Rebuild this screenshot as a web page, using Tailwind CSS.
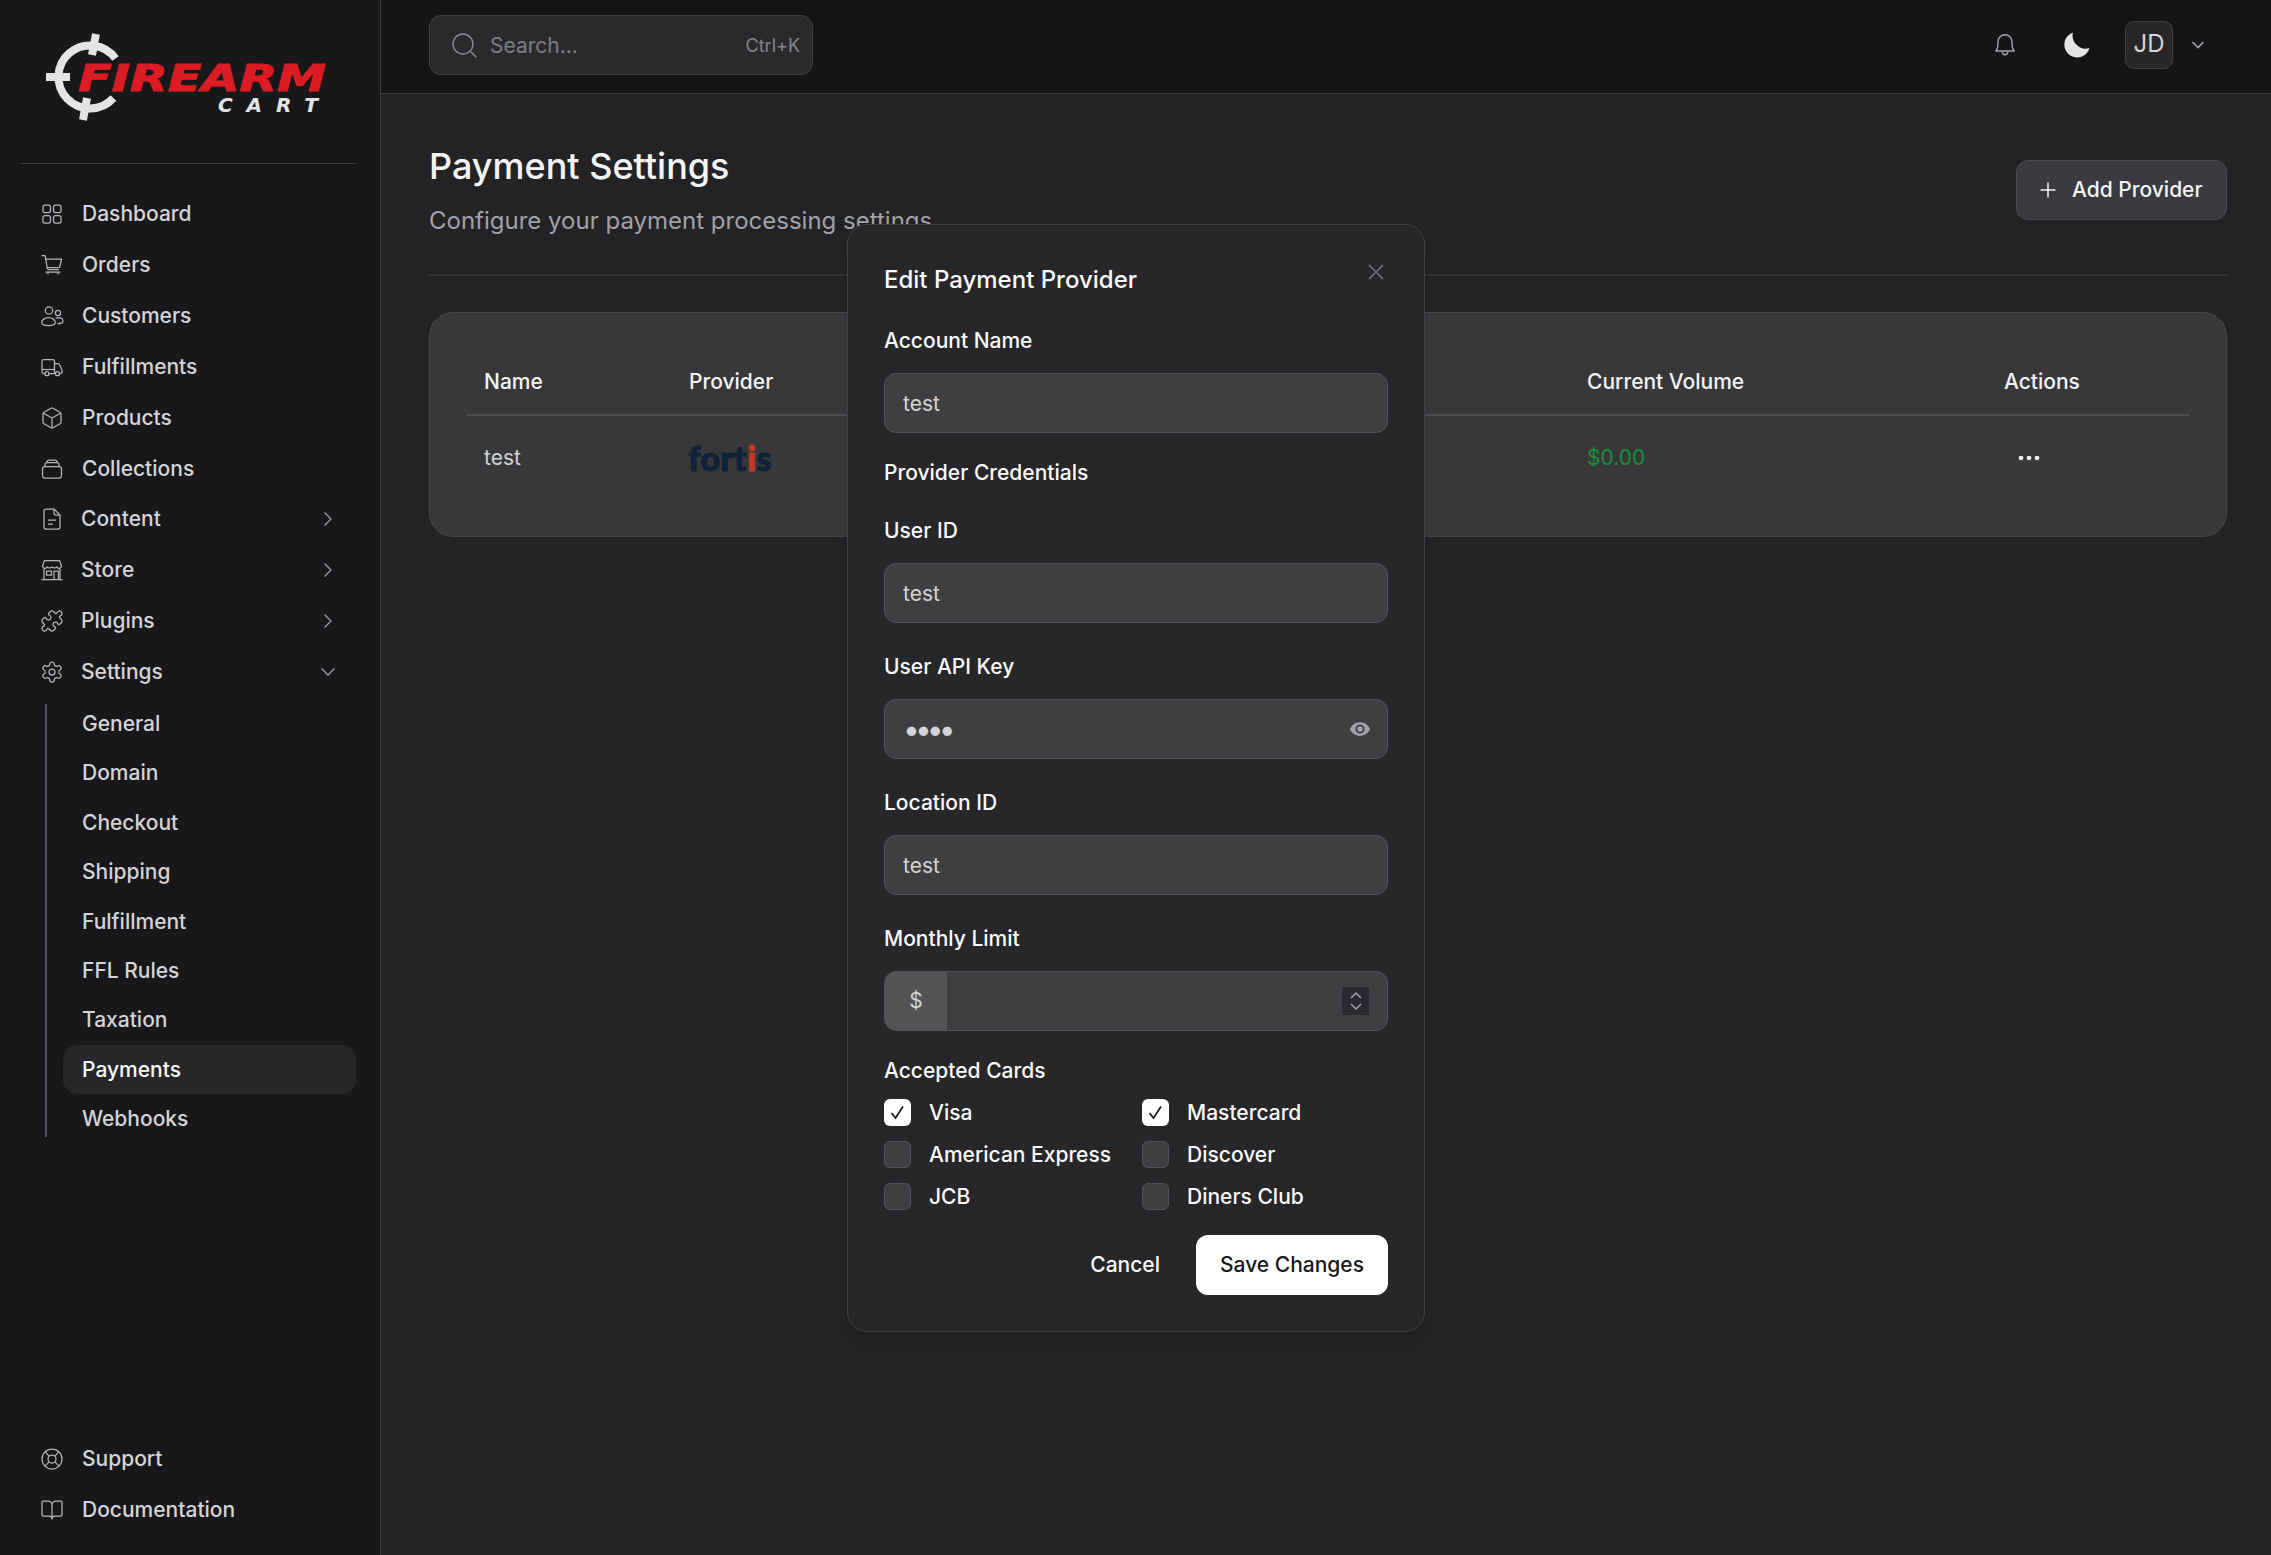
<!DOCTYPE html>
<html lang="en">
<head>
    <meta charset="UTF-8">
    <title>Payment Settings</title>
    <script src="https://cdn.jsdelivr.net/npm/@tailwindcss/browser@4"></script>
</head>
<body class="bg-[#232325] font-['Inter',sans-serif]">
<div class="relative flex h-[1555px] w-[2271px] overflow-hidden">

    <!-- Sidebar -->
    <aside class="flex w-[381px] shrink-0 flex-col border-r border-[#3a3a3e] bg-[#18181b] text-[21px] font-medium text-[#d4d4d8]">
        <div class="h-[163px] shrink-0">
            <svg class="block" width="381" height="163" viewBox="0 0 381 163">
                <path d="M115.500 58.500A31.500 31.500 0 1 0 113.400 98" fill="none" stroke="#e4e4e7" stroke-width="8"/>
                <path d="M46 77H70M96 34L92 55M87 98L83 120" fill="none" stroke="#e4e4e7" stroke-width="8"/>
                <text x="78" y="91" font-family="'DejaVu Sans',sans-serif" font-weight="700" font-style="italic" font-size="38" fill="#dc1c24" stroke="#dc1c24" stroke-width="1" textLength="248" lengthAdjust="spacingAndGlyphs">FIREARM</text>
                <text x="218" y="112" font-family="'DejaVu Sans',sans-serif" font-weight="700" font-style="italic" font-size="20" fill="#e4e4e7" textLength="100" lengthAdjust="spacing">CART</text>
            </svg>
        </div>
        <div class="ml-[21px] mr-[24px] h-px bg-[#3f3f46]"></div>

        <nav class="mt-[24px] pl-[40px] pr-[44px]">
            <a class="flex h-[51px] items-center gap-[18px]">
                <svg class="text-[#b4b4b8]" width="24" height="24" viewBox="0 0 24 24" fill="none" stroke="currentColor" stroke-width="1.25"><rect x="3" y="3" width="7.5" height="7.5" rx="2"/><rect x="13.5" y="3" width="7.5" height="7.5" rx="2"/><rect x="3" y="13.5" width="7.5" height="7.5" rx="2"/><rect x="13.5" y="13.5" width="7.5" height="7.5" rx="2"/></svg>
                Dashboard
            </a>
            <a class="flex h-[51px] items-center gap-[18px]">
                <svg class="text-[#b4b4b8]" width="24" height="24" viewBox="0 0 24 24" fill="none" stroke="currentColor" stroke-width="1.25" stroke-linecap="round" stroke-linejoin="round"><path d="M2 2.5h2.2a1 1 0 0 1 1 .8L7.4 15.5a1.5 1.5 0 0 0 1.5 1.2h9.4"/><path d="M5.6 6H21.5l-1.6 7.5a1.5 1.5 0 0 1-1.5 1.2H7.2"/><path d="M8 19.5v1.5M18 19.5v1.5"/><path d="M6 19h14"/></svg>
                Orders
            </a>
            <a class="flex h-[51px] items-center gap-[18px]">
                <svg class="text-[#b4b4b8]" width="24" height="24" viewBox="0 0 24 24" fill="none" stroke="currentColor" stroke-width="1.25"><circle cx="9" cy="6.5" r="3.7"/><circle cx="18" cy="9" r="2.6"/><path d="M8.5 21.5c-4 0-6.8-.9-6.8-3 0-2.600 3-4.800 6.800-4.800s6.800 2.200 6.800 4.800c0 2.100-2.800 3-6.800 3z"/><path d="M15.500 14.200c.8-.4 1.700-.7 2.700-.7 2.800 0 4.800 1.700 4.800 3.700 0 1.700-2.400 2.500-5.700 2.400"/></svg>
                Customers
            </a>
            <a class="flex h-[51px] items-center gap-[18px]">
                <svg class="text-[#b4b4b8]" width="24" height="24" viewBox="0 0 24 24" fill="none" stroke="currentColor" stroke-width="1.25" stroke-linejoin="round"><path d="M5 18.500H3.500A1.500 1.500 0 0 1 2 17V6a1.500 1.500 0 0 1 1.500-1.500H13A1.500 1.500 0 0 1 14.500 6v12.500H9"/><path d="M14.500 8.500h3.400a1.500 1.500 0 0 1 1.300.8l2.500 4.700a1.500 1.500 0 0 1 .3.900V17a1.500 1.500 0 0 1-1.500 1.500h-1"/><path d="M2 14.500h12.500"/><circle cx="7" cy="18.700" r="2"/><circle cx="17.500" cy="18.700" r="2"/></svg>
                Fulfillments
            </a>
            <a class="flex h-[51px] items-center gap-[18px]">
                <svg class="text-[#b4b4b8]" width="24" height="24" viewBox="0 0 24 24" fill="none" stroke="currentColor" stroke-width="1.25" stroke-linejoin="round"><path d="M21 8a2 2 0 0 0-1-1.730l-7-4a2 2 0 0 0-2 0l-7 4A2 2 0 0 0 3 8v8a2 2 0 0 0 1 1.730l7 4a2 2 0 0 0 2 0l7-4A2 2 0 0 0 21 16z"/><path d="m3.300 7 8.700 5 8.700-5M12 22V12"/></svg>
                Products
            </a>
            <a class="flex h-[51px] items-center gap-[18px]">
                <svg class="text-[#b4b4b8]" width="24" height="24" viewBox="0 0 24 24" fill="none" stroke="currentColor" stroke-width="1.25" stroke-linejoin="round"><rect x="2.500" y="9.500" width="19" height="11.500" rx="2.500"/><path d="M5 9.500V7.500a2 2 0 0 1 2-2h10a2 2 0 0 1 2 2v2"/><path d="M7 5.500V5a2 2 0 0 1 2-2h6a2 2 0 0 1 2 2v.5"/></svg>
                Collections
            </a>
            <a class="flex h-[50px] items-center gap-[17px]">
                <svg class="text-[#b4b4b8]" width="24" height="24" viewBox="0 0 24 24" fill="none" stroke="currentColor" stroke-width="1.25" stroke-linejoin="round"><path d="M14 2H6a2 2 0 0 0-2 2v16a2 2 0 0 0 2 2h12a2 2 0 0 0 2-2V8z"/><path d="M14 2v4a2 2 0 0 0 2 2h4M8 13h8M8 17h5"/></svg>
                Content
                <svg class="ml-auto text-[#a1a1aa]" width="16" height="16" viewBox="0 0 16 16" fill="none" stroke="currentColor" stroke-width="1.25"><path d="M4.500 1.500 11 8l-6.500 6.500"/></svg>
            </a>
            <a class="flex h-[51px] items-center gap-[17px]">
                <svg class="text-[#b4b4b8]" width="24" height="24" viewBox="0 0 24 24" fill="none" stroke="currentColor" stroke-width="1.25" stroke-linejoin="round"><path d="M4.500 2.500h15l2 5.500a2.500 2.500 0 0 1-4.800.8 3 3 0 0 1-4.700 0 3 3 0 0 1-4.700 0A2.500 2.500 0 0 1 2.500 8z"/><path d="M4 11v10M20 11v10M1.500 21.500h21"/><rect x="6.500" y="13" width="5" height="4"/><path d="M14 21v-8h4.500v8"/></svg>
                Store
                <svg class="ml-auto text-[#a1a1aa]" width="16" height="16" viewBox="0 0 16 16" fill="none" stroke="currentColor" stroke-width="1.25"><path d="M4.500 1.500 11 8l-6.500 6.500"/></svg>
            </a>
            <a class="flex h-[51px] items-center gap-[17px]">
                <svg class="text-[#b4b4b8]" width="24" height="24" viewBox="0 0 24 24" fill="none" stroke="currentColor" stroke-width="1.25" stroke-linejoin="round"><path d="M19.439 7.850c-.049.322.059.648.289.878l1.568 1.568c.47.47.706 1.087.706 1.704s-.235 1.233-.706 1.704l-1.611 1.611a.98.98 0 0 1-.837.276c-.47-.07-.802-.48-.968-.925a2.501 2.501 0 1 0-3.214 3.214c.446.166.855.497.925.968a.979.979 0 0 1-.276.837l-1.61 1.61a2.404 2.404 0 0 1-1.705.707 2.402 2.402 0 0 1-1.704-.706l-1.568-1.568a1.026 1.026 0 0 0-.877-.29c-.493.074-.84.504-1.020.968a2.500 2.500 0 1 1-3.237-3.237c.464-.18.894-.527.967-1.020a1.026 1.026 0 0 0-.289-.877l-1.568-1.568A2.402 2.402 0 0 1 1.998 12c0-.617.236-1.234.706-1.704L4.230 8.770c.24-.24.581-.353.917-.303.515.077.877.528 1.073 1.010a2.500 2.500 0 1 0 3.259-3.259c-.482-.196-.933-.558-1.010-1.073-.05-.336.062-.676.303-.917l1.525-1.525A2.402 2.402 0 0 1 12 1.998c.617 0 1.234.236 1.704.706l1.568 1.568c.23.23.556.338.877.29.493-.074.84-.504 1.020-.968a2.500 2.500 0 1 1 3.237 3.237c-.464.18-.894.527-.967 1.020Z"/></svg>
                Plugins
                <svg class="ml-auto text-[#a1a1aa]" width="16" height="16" viewBox="0 0 16 16" fill="none" stroke="currentColor" stroke-width="1.25"><path d="M4.500 1.500 11 8l-6.500 6.500"/></svg>
            </a>
            <a class="flex h-[51px] items-center gap-[17px]">
                <svg class="text-[#b4b4b8]" width="24" height="24" viewBox="0 0 24 24" fill="none" stroke="currentColor" stroke-width="1.25" stroke-linejoin="round"><path d="M12.220 2h-.44a2 2 0 0 0-2 2v.18a2 2 0 0 1-1 1.730l-.43.25a2 2 0 0 1-2 0l-.15-.08a2 2 0 0 0-2.730.73l-.22.38a2 2 0 0 0 .73 2.730l.15.1a2 2 0 0 1 1 1.720v.51a2 2 0 0 1-1 1.740l-.15.09a2 2 0 0 0-.73 2.730l.22.38a2 2 0 0 0 2.730.73l.15-.08a2 2 0 0 1 2 0l.43.25a2 2 0 0 1 1 1.730V20a2 2 0 0 0 2 2h.44a2 2 0 0 0 2-2v-.18a2 2 0 0 1 1-1.730l.43-.25a2 2 0 0 1 2 0l.15.08a2 2 0 0 0 2.730-.73l.22-.39a2 2 0 0 0-.73-2.730l-.15-.08a2 2 0 0 1-1-1.740v-.5a2 2 0 0 1 1-1.740l.15-.09a2 2 0 0 0 .73-2.730l-.22-.38a2 2 0 0 0-2.730-.73l-.15.08a2 2 0 0 1-2 0l-.43-.25a2 2 0 0 1-1-1.730V4a2 2 0 0 0-2-2z"/><circle cx="12" cy="12" r="3"/></svg>
                Settings
                <svg class="ml-auto text-[#a1a1aa]" width="16" height="16" viewBox="0 0 16 16" fill="none" stroke="currentColor" stroke-width="1.25"><path d="M1.500 4.500 8 11l6.500-6.500"/></svg>
            </a>
        </nav>

        <!-- Settings submenu -->
        <div class="ml-[45px] mr-[24px] mt-[7px] border-l-2 border-[#52525b] pl-[16px]">
            <div class="-mb-[7px] -mt-[5px]">
                <a class="flex h-[49.4px] items-center pl-[19px]">General</a>
                <a class="flex h-[49.4px] items-center pl-[19px]">Domain</a>
                <a class="flex h-[49.4px] items-center pl-[19px]">Checkout</a>
                <a class="flex h-[49.4px] items-center pl-[19px]">Shipping</a>
                <a class="flex h-[49.4px] items-center pl-[19px]">Fulfillment</a>
                <a class="flex h-[49.4px] items-center pl-[19px]">FFL Rules</a>
                <a class="flex h-[49.4px] items-center pl-[19px]">Taxation</a>
                <a class="flex h-[49.4px] items-center rounded-[14px] bg-[#27272a] pl-[19px] text-[#fafafa]">Payments</a>
                <a class="flex h-[49.4px] items-center pl-[19px]">Webhooks</a>
            </div>
        </div>

        <div class="mt-auto pb-[20px] pl-[40px]">
            <a class="flex h-[51px] items-center gap-[18px]">
                <svg class="text-[#b4b4b8]" width="24" height="24" viewBox="0 0 24 24" fill="none" stroke="currentColor" stroke-width="1.25"><circle cx="12" cy="12" r="10"/><circle cx="12" cy="12" r="4"/><path d="m4.930 4.930 4.240 4.240m5.660 5.660 4.240 4.240m-4.240-9.900 4.240-4.240m-14.140 14.140 4.240-4.240"/></svg>
                Support
            </a>
            <a class="flex h-[51px] items-center gap-[18px]">
                <svg class="text-[#b4b4b8]" width="24" height="24" viewBox="0 0 24 24" fill="none" stroke="currentColor" stroke-width="1.25" stroke-linejoin="round"><path d="M12 7v14"/><path d="M3 18a1 1 0 0 1-1-1V4a1 1 0 0 1 1-1h5a4 4 0 0 1 4 4 4 4 0 0 1 4-4h5a1 1 0 0 1 1 1v13a1 1 0 0 1-1 1h-6a3 3 0 0 0-3 3 3 3 0 0 0-3-3z"/></svg>
                Documentation
            </a>
        </div>
    </aside>

    <!-- Main -->
    <div class="flex min-w-0 flex-1 flex-col">
        <header class="flex h-[94px] shrink-0 items-center border-b border-[#3a3a3e] bg-[#151517] pb-[3px] pl-[48px]">
            <div class="flex h-[60px] w-[384px] items-center rounded-[12px] border border-[#3f3f46] bg-[#2a2a2d] pl-[21px] pr-[12px]">
                <svg class="text-[#85858c]" width="26" height="26" viewBox="0 0 26 26" fill="none" stroke="currentColor" stroke-width="1.5" stroke-linecap="round"><circle cx="12" cy="12" r="10"/><path d="m20 20 5 5"/></svg>
                <span class="ml-[13px] pt-[1px] text-[21px] text-[#7d7d84]">Search...</span>
                <span class="ml-auto text-[18px] text-[#85858c]">Ctrl+K</span>
            </div>
            <svg class="ml-[1179px] text-[#a1a1aa]" width="26" height="26" viewBox="0 0 24 24" fill="none" stroke="currentColor" stroke-width="1.25" stroke-linejoin="round"><path d="M3.500 17.500c1.500-1.500 2-3 2-6.500V9a6.500 6.500 0 0 1 13 0v2c0 3.500.5 5 2 6.500z"/><path d="M9.500 18.500a2.500 2.500 0 0 0 5 0"/></svg>
            <svg class="ml-[45px] text-[#e4e4e7]" width="28" height="28" viewBox="0 0 28 28" fill="currentColor"><path d="M10 1.500A12.800 12.800 0 1 0 26.500 17 A13 13 0 0 1 10 1.500z"/></svg>
            <div class="ml-[34px] flex h-[48px] w-[48px] items-center justify-center rounded-[9px] border border-[#3f3f46] bg-[#27272a] pb-[2px] text-[24px] text-[#d4d4d8]">JD</div>
            <svg class="ml-[17px] text-[#a1a1aa]" width="16" height="16" viewBox="0 0 16 16" fill="none" stroke="currentColor" stroke-width="1.75"><path d="m2.500 5 5.500 5.500L13.500 5"/></svg>
        </header>

        <main class="pl-[48px] pr-[44px]">
            <div class="flex items-start justify-between border-b-2 border-[#333336] pb-[36px] pt-[46px]">
                <div>
                    <h1 class="text-[36px] font-medium leading-[52px] text-[#f4f4f5]">Payment Settings</h1>
                    <p class="mt-[12px] text-[24px] leading-[34px] text-[#a1a1aa]">Configure your payment processing settings</p>
                </div>
                <button class="mt-[20px] flex h-[60px] w-[211px] items-center rounded-[12px] border border-[#4b4b52] bg-[#3a3a40] pl-[22px] text-[21px] font-medium text-[#f4f4f5]">
                    <svg width="18" height="18" viewBox="0 0 18 18" fill="none" stroke="currentColor" stroke-width="1.5"><path d="M9 1.500v15M1.500 9h15"/></svg>
                    <span class="ml-[15px]">Add Provider</span>
                </button>
            </div>

            <div class="mt-[36px] h-[225px] rounded-[24px] border border-[#47474b] bg-[#38383a] px-[37px] pt-[35px]">
                <div class="grid h-[68px] grid-cols-[205px_898px_417px_203px] items-center border-b-2 border-[#4e4e52] pt-[2px] text-[21px] font-medium text-[#f4f4f5]">
                    <div class="px-[17px]">Name</div>
                    <div class="px-[17px]">Provider</div>
                    <div class="px-[17px]">Current Volume</div>
                    <div class="px-[17px]">Actions</div>
                </div>
                <div class="grid h-[84px] grid-cols-[205px_898px_417px_203px] items-center text-[21px] text-[#d4d4d8]">
                    <div class="px-[17px]">test</div>
                    <div class="px-[16px] font-['Lato',sans-serif] text-[34px] font-black leading-none tracking-[0.5px] text-[#0f2238] [-webkit-text-stroke-width:1px]">fort<span class="text-[#c0392b]">i</span>s</div>
                    <div class="px-[17px] text-[#15923f]">$0.00</div>
                    <div class="pl-[31px]">
                        <svg width="22" height="6" viewBox="0 0 22 6" fill="#f4f4f5"><circle cx="3" cy="3" r="2.300"/><circle cx="11" cy="3" r="2.300"/><circle cx="19" cy="3" r="2.300"/></svg>
                    </div>
                </div>
            </div>
        </main>
    </div>

    <!-- Edit modal -->
    <div class="absolute left-[847px] top-[224px] w-[578px] rounded-[20px] border border-[#3f3f46] bg-[#27272a] pb-[36px] pl-[36px] pr-[36px] pt-[40px] text-[21px] font-medium text-[#fafafa] shadow-lg">
        <div class="flex items-start justify-between">
            <h2 class="text-[24px] font-medium leading-[30px]">Edit Payment Provider</h2>
            <svg class="mr-[3px] -mt-[2px] text-[#71717a]" width="18" height="18" viewBox="0 0 18 18" fill="none" stroke="currentColor" stroke-width="1.75"><path d="m2 2 14 14M16 2 2 16"/></svg>
        </div>

        <label class="mt-[32px] block leading-[28px]">Account Name</label>
        <input class="mt-[18px] h-[60px] w-full rounded-[12px] border border-[#52525b] bg-[#3f3f42] px-[18px] font-normal text-[#d4d4d8]" value="test">

        <div class="mt-[26px] leading-[28px]">Provider Credentials</div>

        <label class="mt-[30px] block leading-[28px]">User ID</label>
        <input class="mt-[18px] h-[60px] w-full rounded-[12px] border border-[#52525b] bg-[#3f3f42] px-[18px] font-normal text-[#d4d4d8]" value="test">

        <label class="mt-[30px] block leading-[28px]">User API Key</label>
        <div class="relative mt-[18px]">
            <input type="password" class="h-[60px] w-full rounded-[12px] border border-[#52525b] bg-[#3f3f42] px-[18px] text-[30px] font-normal tracking-[-5px] text-[#d4d4d8]" value="test">
            <svg class="absolute right-[17px] top-[19px] text-[#a1a1aa]" width="22" height="22" viewBox="0 0 24 24" fill="currentColor"><path fill-rule="evenodd" d="M12 4.500C7 4.500 2.700 7.600 1 12c1.700 4.400 6 7.500 11 7.500s9.300-3.100 11-7.500c-1.700-4.400-6-7.500-11-7.500zM12 17a5 5 0 1 1 0-10 5 5 0 0 1 0 10zm0-2a3 3 0 1 0 0-6 3 3 0 0 0 0 6z"/></svg>
        </div>

        <label class="mt-[30px] block leading-[28px]">Location ID</label>
        <input class="mt-[18px] h-[60px] w-full rounded-[12px] border border-[#52525b] bg-[#3f3f42] px-[18px] font-normal text-[#d4d4d8]" value="test">

        <label class="mt-[30px] block leading-[28px]">Monthly Limit</label>
        <div class="mt-[18px] flex h-[60px] items-stretch overflow-hidden rounded-[12px] border border-[#52525b] bg-[#3f3f42]">
            <span class="flex w-[62px] items-center justify-center bg-[#545456] font-normal text-[#d4d4d8]">$</span>
            <span class="ml-auto mr-[18px] flex h-[28px] w-[27px] items-center justify-center self-center bg-[#2a2a33] text-[#a1a1aa]">
                <svg width="14" height="22" viewBox="0 0 14 22" fill="none" stroke="currentColor" stroke-width="1.5"><path d="m2 8 5-5 5 5M2 14l5 5 5-5"/></svg>
            </span>
        </div>

        <div class="mt-[26px] leading-[28px]">Accepted Cards</div>
        <div class="mt-[14px] grid grid-cols-[258px_1fr] gap-y-[15px]">
            <label class="flex h-[27px] items-center gap-[18px]">
                <span class="flex h-[27px] w-[27px] items-center justify-center rounded-[6px] bg-white text-[#18181b]"><svg width="17" height="17" viewBox="0 0 17 17" fill="none" stroke="currentColor" stroke-width="1.75"><path d="m2.500 9 4 5L14 2.500"/></svg></span>
                Visa
            </label>
            <label class="flex h-[27px] items-center gap-[18px]">
                <span class="flex h-[27px] w-[27px] items-center justify-center rounded-[6px] bg-white text-[#18181b]"><svg width="17" height="17" viewBox="0 0 17 17" fill="none" stroke="currentColor" stroke-width="1.75"><path d="m2.500 9 4 5L14 2.500"/></svg></span>
                Mastercard
            </label>
            <label class="flex h-[27px] items-center gap-[18px]">
                <span class="h-[27px] w-[27px] rounded-[6px] border border-[#52525b] bg-[#3f3f42]"></span>
                American Express
            </label>
            <label class="flex h-[27px] items-center gap-[18px]">
                <span class="h-[27px] w-[27px] rounded-[6px] border border-[#52525b] bg-[#3f3f42]"></span>
                Discover
            </label>
            <label class="flex h-[27px] items-center gap-[18px]">
                <span class="h-[27px] w-[27px] rounded-[6px] border border-[#52525b] bg-[#3f3f42]"></span>
                JCB
            </label>
            <label class="flex h-[27px] items-center gap-[18px]">
                <span class="h-[27px] w-[27px] rounded-[6px] border border-[#52525b] bg-[#3f3f42]"></span>
                Diners Club
            </label>
        </div>

        <div class="mt-[25px] flex items-center justify-end gap-[36px]">
            <button class="font-medium">Cancel</button>
            <button class="h-[60px] w-[192px] rounded-[12px] bg-white font-medium text-[#18181b]">Save Changes</button>
        </div>
    </div>
</div>
</body>
</html>
